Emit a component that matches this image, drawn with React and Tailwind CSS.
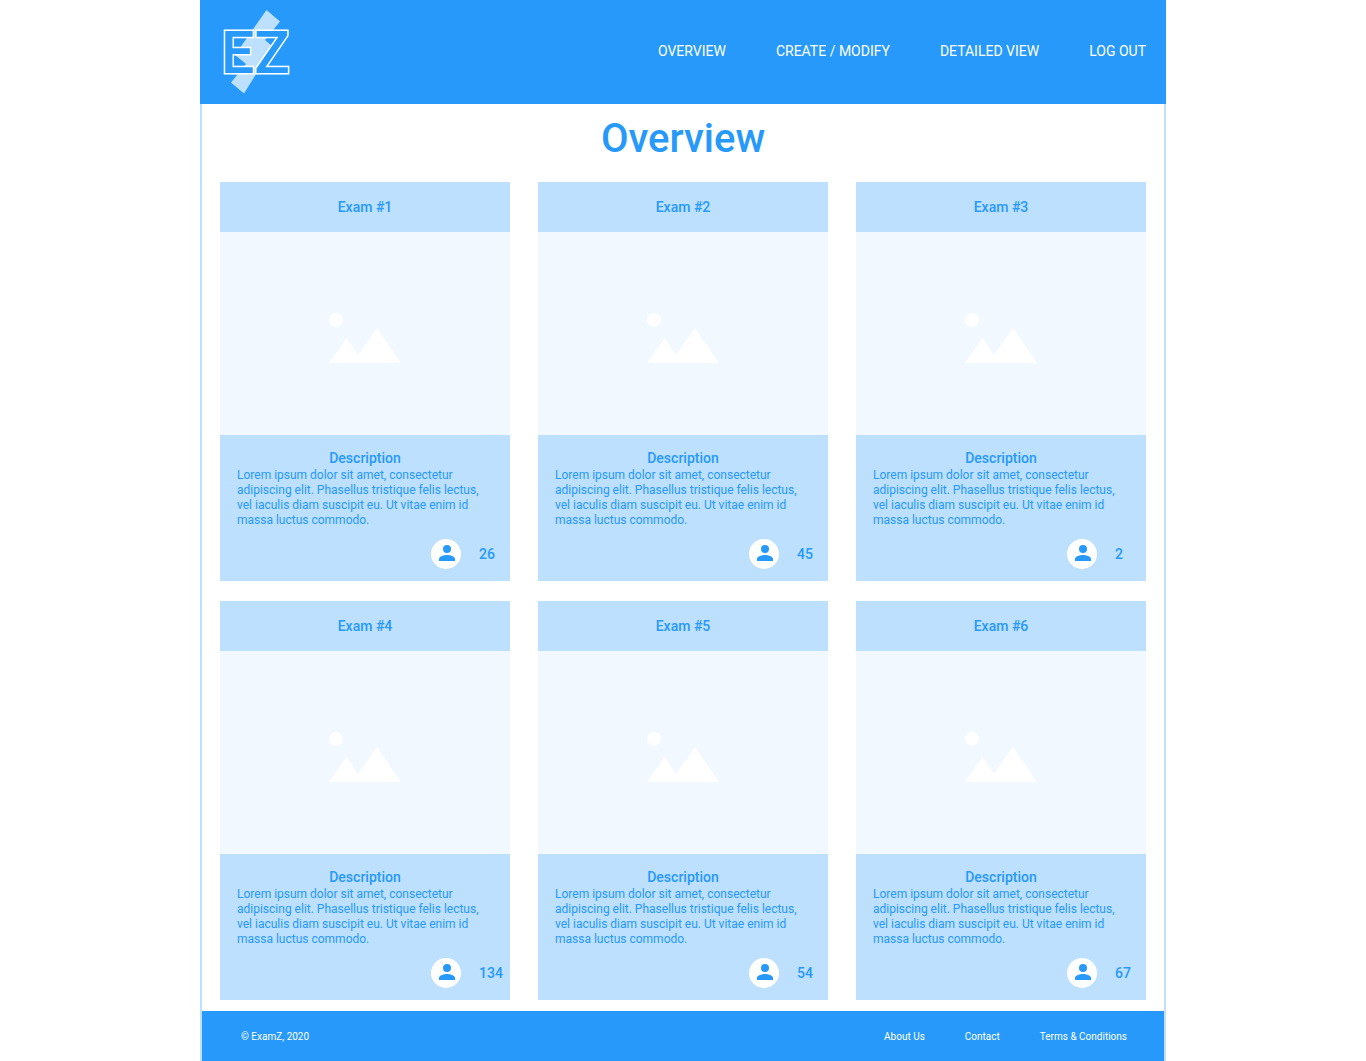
const exams = [
  { title: 'Exam #1', people: 26 },
  { title: 'Exam #2', people: 45 },
  { title: 'Exam #3', people: 2 },
  { title: 'Exam #4', people: 134 },
  { title: 'Exam #5', people: 54 },
  { title: 'Exam #6', people: 67 },
];

const description =
  'Lorem ipsum dolor sit amet, consectetur adipiscing elit. Phasellus tristique felis lectus, vel iaculis diam suscipit eu. Ut vitae enim id massa luctus commodo.';

function Logo() {
  return (
    <svg viewBox="0 0 68 84" className="h-[84px] w-[68px] overflow-visible" role="img" aria-label="ExamZ">
      <path d="M43.5 0L57 11.5L42 30L50 37L21 83.5L8 72.5L23 54L12 45Z" fill="#bde0fe" />
      <text
        x="-2"
        y="63"
        className="font-['Roboto',sans-serif] text-[59px] font-medium"
        fill="#2699fb"
        stroke="#fff"
        strokeWidth="3"
        paintOrder="stroke"
      >
        EZ
      </text>
    </svg>
  );
}

function ImagePlaceholder() {
  return (
    <svg viewBox="0 0 72 50" className="h-[50px] w-[72px]" fill="#fff" aria-hidden="true">
      <circle cx="7" cy="7" r="7" />
      <path d="M0 50L17.5 25L29 42L48 15L72 50Z" />
    </svg>
  );
}

function PersonIcon() {
  return (
    <svg viewBox="0 0 30 30" className="size-[30px]" aria-hidden="true">
      <circle cx="15" cy="15" r="15" fill="#fff" />
      <circle cx="16" cy="10" r="4" fill="#2699fb" />
      <path d="M8 22V20C8 17.3 13.3 16 16 16S24 17.3 24 20V22Z" fill="#2699fb" />
    </svg>
  );
}

function ExamCard({ title, people }) {
  return (
    <article className="bg-[#bde0fe]">
      <h2 className="py-[15px] text-center text-sm font-medium">{title}</h2>
      <div className="flex h-[203px] items-center justify-center bg-[#f1f8ff] pt-2">
        <ImagePlaceholder />
      </div>
      <div className="pt-[13px] pb-3">
        <h3 className="text-center text-sm font-medium">Description</h3>
        <p className="px-[17px] text-xs leading-[15px]">{description}</p>
        <div className="mt-[11px] flex items-center justify-end gap-[18px]">
          <PersonIcon />
          <span className="w-[31px] text-sm font-medium">{people}</span>
        </div>
      </div>
    </article>
  );
}

export default function App() {
  return (
    <div className="mx-auto max-w-[966px] bg-white font-['Roboto',sans-serif] text-[#2699fb]">
      <header className="flex items-center justify-between bg-[#2699fb] px-5 py-[10px]">
        <a href="#home" className="ml-[3px]">
          <Logo />
        </a>
        <nav className="flex gap-[50px] pb-[2px] text-sm text-white">
          <a href="#overview">OVERVIEW</a>
          <a href="#create">CREATE / MODIFY</a>
          <a href="#detailed">DETAILED VIEW</a>
          <a href="#logout">LOG OUT</a>
        </nav>
      </header>
      <div className="border-x-2 border-[#bde0fe]">
        <main className="px-[18px] pb-[11px]">
          <h1 className="pt-[9px] pb-[17px] text-center text-[40px] leading-[52px] font-medium">Overview</h1>
          <div className="grid grid-cols-3 gap-x-7 gap-y-5">
            {exams.map((exam) => (
              <ExamCard key={exam.title} {...exam} />
            ))}
          </div>
        </main>
        <footer className="flex items-center justify-between bg-[#2699fb] pt-[18px] pr-[37px] pb-4 pl-[39px] text-[10px] leading-4 text-white">
          <p>© ExamZ, 2020</p>
          <nav className="flex gap-10">
            <a href="#about">About Us</a>
            <a href="#contact">Contact</a>
            <a href="#terms">Terms &amp; Conditions</a>
          </nav>
        </footer>
      </div>
    </div>
  );
}
